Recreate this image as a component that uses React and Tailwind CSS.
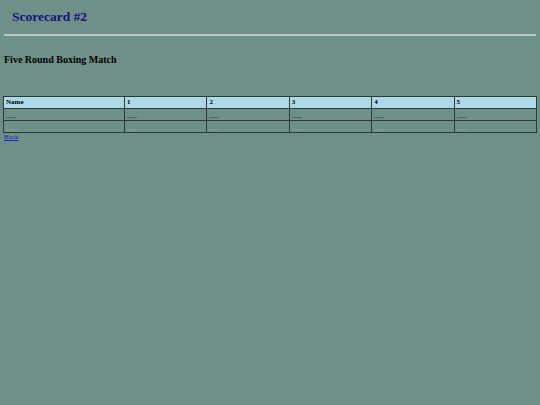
import React from "react";

export default function App() {
  const rounds = ["1", "2", "3", "4", "5"];

  return (
    <div className="min-h-[405px] w-[540px] bg-[#6f8f89] font-['Liberation_Serif',serif] text-black">
      <div className="px-[12px] pt-[8px] pb-[8px]">
        <h1 className="text-[13.5px] font-bold leading-[18px] text-[#14147a]">Scorecard #2</h1>
      </div>
      <div className="mx-[4px] h-[2px] bg-[#b6c6c2]"></div>

      <h2 className="mt-[17px] px-[4px] text-[10px] font-bold leading-[13px]">Five Round Boxing Match</h2>

      <table className="mx-[3px] mt-[30px] w-[534px] border-collapse text-[7px] leading-[11px]">
        <thead>
          <tr className="bg-[#add8e6]">
            <th className="w-[121px] border border-[#2a3a38] px-[2px] text-left font-bold">Name</th>
            {rounds.map((r) => (
              <th key={r} className="border border-[#2a3a38] px-[2px] text-left font-bold">
                {r}
              </th>
            ))}
          </tr>
        </thead>
        <tbody>
          {[0, 1].map((row) => (
            <tr key={row}>
              {["n", ...rounds].map((c) => (
                <td key={c} className="h-[12px] border border-[#2a3a38] px-[2px] align-top">
                  <span
                    className={`mt-[8px] block w-[10px] ${row === 0 ? "h-[1px] bg-[#4f625f]" : "h-[2px] bg-[#7f9590]"}`}
                  ></span>
                </td>
              ))}
            </tr>
          ))}
        </tbody>
      </table>
      <a href="#" className="block px-[4px] text-[7px] leading-[8px] text-[#2020c0] underline">
        Back
      </a>
    </div>
  );
}
